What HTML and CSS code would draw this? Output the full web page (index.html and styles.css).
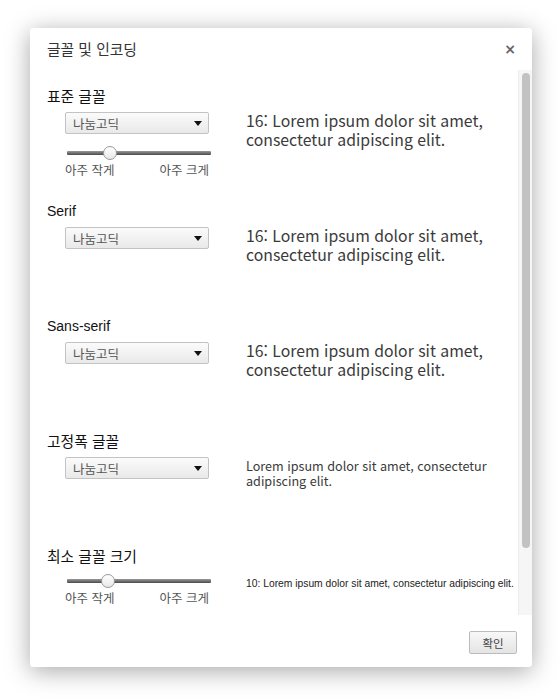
FILE: index.html
```html
<!DOCTYPE html>
<html lang="ko">
<head>
<meta charset="utf-8">
<link rel="stylesheet" href="styles.css">
</head>
<body>
<div class="dialog">
  <div class="header">
    <span class="title">글꼴 및 인코딩</span>
    <span class="close">×</span>
  </div>
  <div class="body">
    <div class="content">
      <section class="sec">
        <div class="label ko">표준 글꼴</div>
        <div class="row">
          <div class="controls">
            <div class="select"><span>나눔고딕</span><i class="arrow"></i></div>
            <div class="slider"><div class="track"></div><div class="thumb t1"></div></div>
            <div class="ends"><span>아주 작게</span><span>아주 크게</span></div>
          </div>
          <div class="sample s16">16: Lorem ipsum dolor sit amet, consectetur adipiscing elit.</div>
        </div>
      </section>
      <section class="sec">
        <div class="label">Serif</div>
        <div class="row">
          <div class="controls">
            <div class="select"><span>나눔고딕</span><i class="arrow"></i></div>
          </div>
          <div class="sample s16">16: Lorem ipsum dolor sit amet, consectetur adipiscing elit.</div>
        </div>
      </section>
      <section class="sec">
        <div class="label">Sans-serif</div>
        <div class="row">
          <div class="controls">
            <div class="select"><span>나눔고딕</span><i class="arrow"></i></div>
          </div>
          <div class="sample s16">16: Lorem ipsum dolor sit amet, consectetur adipiscing elit.</div>
        </div>
      </section>
      <section class="sec">
        <div class="label ko">고정폭 글꼴</div>
        <div class="row">
          <div class="controls">
            <div class="select"><span>나눔고딕</span><i class="arrow"></i></div>
          </div>
          <div class="sample s12">Lorem ipsum dolor sit amet, consectetur adipiscing elit.</div>
        </div>
      </section>
      <section class="sec last">
        <div class="label ko">최소 글꼴 크기</div>
        <div class="row">
          <div class="controls">
            <div class="slider small"><div class="track"></div><div class="thumb t2"></div></div>
            <div class="ends"><span>아주 작게</span><span>아주 크게</span></div>
          </div>
          <div class="sample s9">10: Lorem ipsum dolor sit amet, consectetur adipiscing elit.</div>
        </div>
      </section>
    </div>
    <div class="scrollbar"><div class="sthumb"></div></div>
  </div>
  <div class="footer">
    <button class="btn">확인</button>
  </div>
</div>
</body>
</html>
```

FILE: styles.css
```css
html, body {
  margin: 0;
  padding: 0;
  background: #fff;
}
body {
  width: 559px;
  height: 699px;
  overflow: hidden;
  font-family: "Noto Sans CJK KR", "Liberation Sans", sans-serif;
}
.dialog {
  margin: 28px 0 0 30px;
  width: 502px;
  height: 639px;
  background: #fff;
  border-radius: 3px;
  box-shadow: 0 4px 24px rgba(0, 0, 0, 0.35);
  display: flex;
  flex-direction: column;
}
.header {
  height: 42px;
  display: flex;
  align-items: center;
  justify-content: space-between;
  padding: 0 16px 0 17px;
}
.title {
  font-size: 14.8px;
  color: #333;
  margin-top: -2px;
}
.close {
  font-family: "DejaVu Sans", sans-serif;
  font-size: 14px;
  font-weight: bold;
  color: #666;
  margin-top: -1px;
}
.body {
  height: 545px;
  display: flex;
}
.content {
  flex: 1;
  padding: 18px 0 0 17px;
  overflow: hidden;
}
.sec {
  height: 115px;
}
.label {
  font-family: "Liberation Sans", "Noto Sans CJK KR", sans-serif;
  font-size: 14px;
  line-height: 16px;
  color: #111;
}
.label.ko {
  font-family: "Noto Sans CJK KR", sans-serif;
  font-size: 14.8px;
}
.row {
  display: flex;
  margin-top: 8px;
}
.last .row {
  margin-top: 10px;
}
.controls {
  margin-left: 18px;
  width: 144px;
}
.select {
  box-sizing: border-box;
  width: 144px;
  height: 22px;
  border: 1px solid #c3c3c3;
  border-radius: 2px;
  background: linear-gradient(#fbfbfb, #e9e9e9);
  display: flex;
  align-items: center;
  justify-content: space-between;
  padding: 0 5px 0 7px;
  font-size: 12.5px;
  color: #555;
}
.arrow {
  width: 0;
  height: 0;
  border-left: 4.5px solid transparent;
  border-right: 4.5px solid transparent;
  border-top: 5px solid #111;
  margin-right: 1px;
}
.slider {
  position: relative;
  height: 14px;
  margin: 12px 0 0 2px;
  width: 144px;
}
.slider.small {
  margin-top: 0;
}
.track {
  position: absolute;
  left: 0;
  right: 0;
  top: 5px;
  height: 4px;
  border-radius: 1px;
  background: linear-gradient(#9a9a9a, #4a4a4a);
}
.thumb {
  position: absolute;
  top: 0;
  width: 12px;
  height: 12px;
  border: 1px solid #999;
  border-radius: 50%;
  background: linear-gradient(#fff, #e8e8e8);
}
.t1 { left: 36px; }
.t2 { left: 34px; }
.ends {
  display: flex;
  justify-content: space-between;
  font-size: 12.5px;
  line-height: 15px;
  color: #555;
  margin-top: 2px;
  width: 144px;
}
.sample {
  margin-left: 37px;
  color: #3a3a3a;
}
.s16 {
  font-size: 15.8px;
  line-height: 19px;
  width: 260px;
  margin-top: -1px;
}
.s12 {
  font-size: 12.6px;
  line-height: 15px;
  width: 262px;
  margin-top: 1px;
}
.s9 {
  font-family: "Liberation Sans", sans-serif;
  font-size: 10.3px;
  margin-top: 4px;
  white-space: nowrap;
  color: #222;
}
.scrollbar {
  width: 14px;
  background: #f6f6f6;
  border-left: 1px solid #ececec;
  padding-top: 3px;
  box-sizing: border-box;
  display: flex;
  justify-content: center;
}
.sthumb {
  width: 8px;
  height: 475px;
  border-radius: 4px;
  background: #c2c2c2;
}
.footer {
  flex: 1;
  display: flex;
  justify-content: flex-end;
  align-items: flex-start;
  padding: 16px 15px 0 0;
}
.btn {
  width: 48px;
  height: 23px;
  border: 1px solid #bcbcbc;
  border-radius: 2px;
  background: linear-gradient(#f8f8f8, #e4e4e4);
  font-family: "Noto Sans CJK KR", sans-serif;
  font-size: 11.5px;
  color: #444;
  padding: 0;
}
```
